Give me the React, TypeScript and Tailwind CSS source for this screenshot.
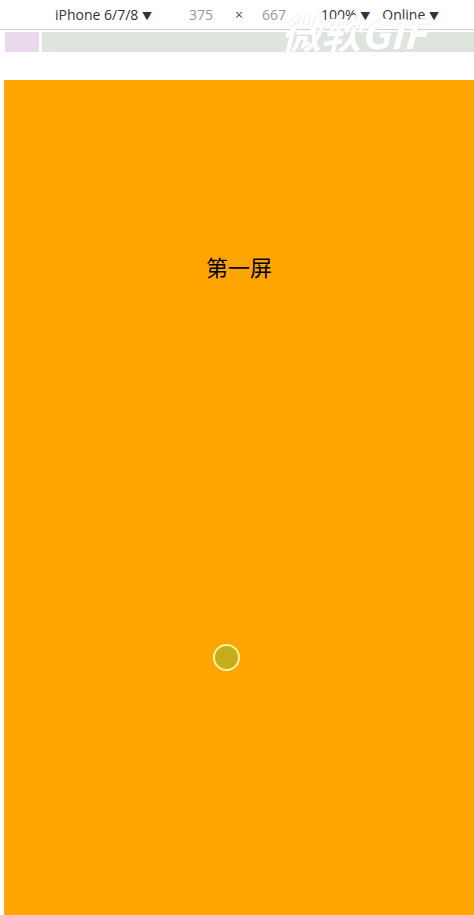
export default function App() {
  return (
    <div className="w-[474px] h-[915px] bg-white flex flex-col overflow-hidden relative" style={{ fontFamily: '"Open Sans", "Noto Sans CJK SC", sans-serif' }}>
      <div className="h-[30px] flex items-center text-[14px] text-[#333] border-b border-[#cfcfcf] shrink-0">
        <span className="ml-[55px]">iPhone 6/7/8 <span className="text-[10px]">▼</span></span>
        <span className="ml-[37px] text-[#999]">375</span>
        <span className="ml-[22px] text-[#555]">×</span>
        <span className="ml-[19px] text-[#999]">667</span>
        <span className="ml-[35px]">100% <span className="text-[10px]">▼</span></span>
        <span className="ml-[12px]">Online <span className="text-[10px]">▼</span></span>
      </div>
      <div className="h-[20px] mt-[2px] flex gap-[3px] shrink-0">
        <div className="w-[34px] ml-[5px] bg-[#ead8ec]" />
        <div className="flex-1 bg-[#dde5dd]" />
      </div>
      <div className="h-[28px] shrink-0" />
      <div className="flex-1 ml-[4px] bg-[#ffa500] flex flex-col items-center">
        <div className="mt-[175px] text-[22px] text-black leading-none" style={{ fontFamily: '"Noto Sans CJK SC", sans-serif' }}>第一屏</div>
        <div className="mt-[367px] mr-[26px] w-[27px] h-[27px] rounded-full bg-[#c7ad1c] border-2 border-[#fff59a]" />
      </div>
      <div className="absolute left-[281px] top-[12px] text-[40px] font-bold italic text-white leading-none" style={{ fontFamily: '"Noto Sans CJK SC", sans-serif', textShadow: '0 0 2px #ddd' }}>微软GIF</div>
    </div>
  );
}
